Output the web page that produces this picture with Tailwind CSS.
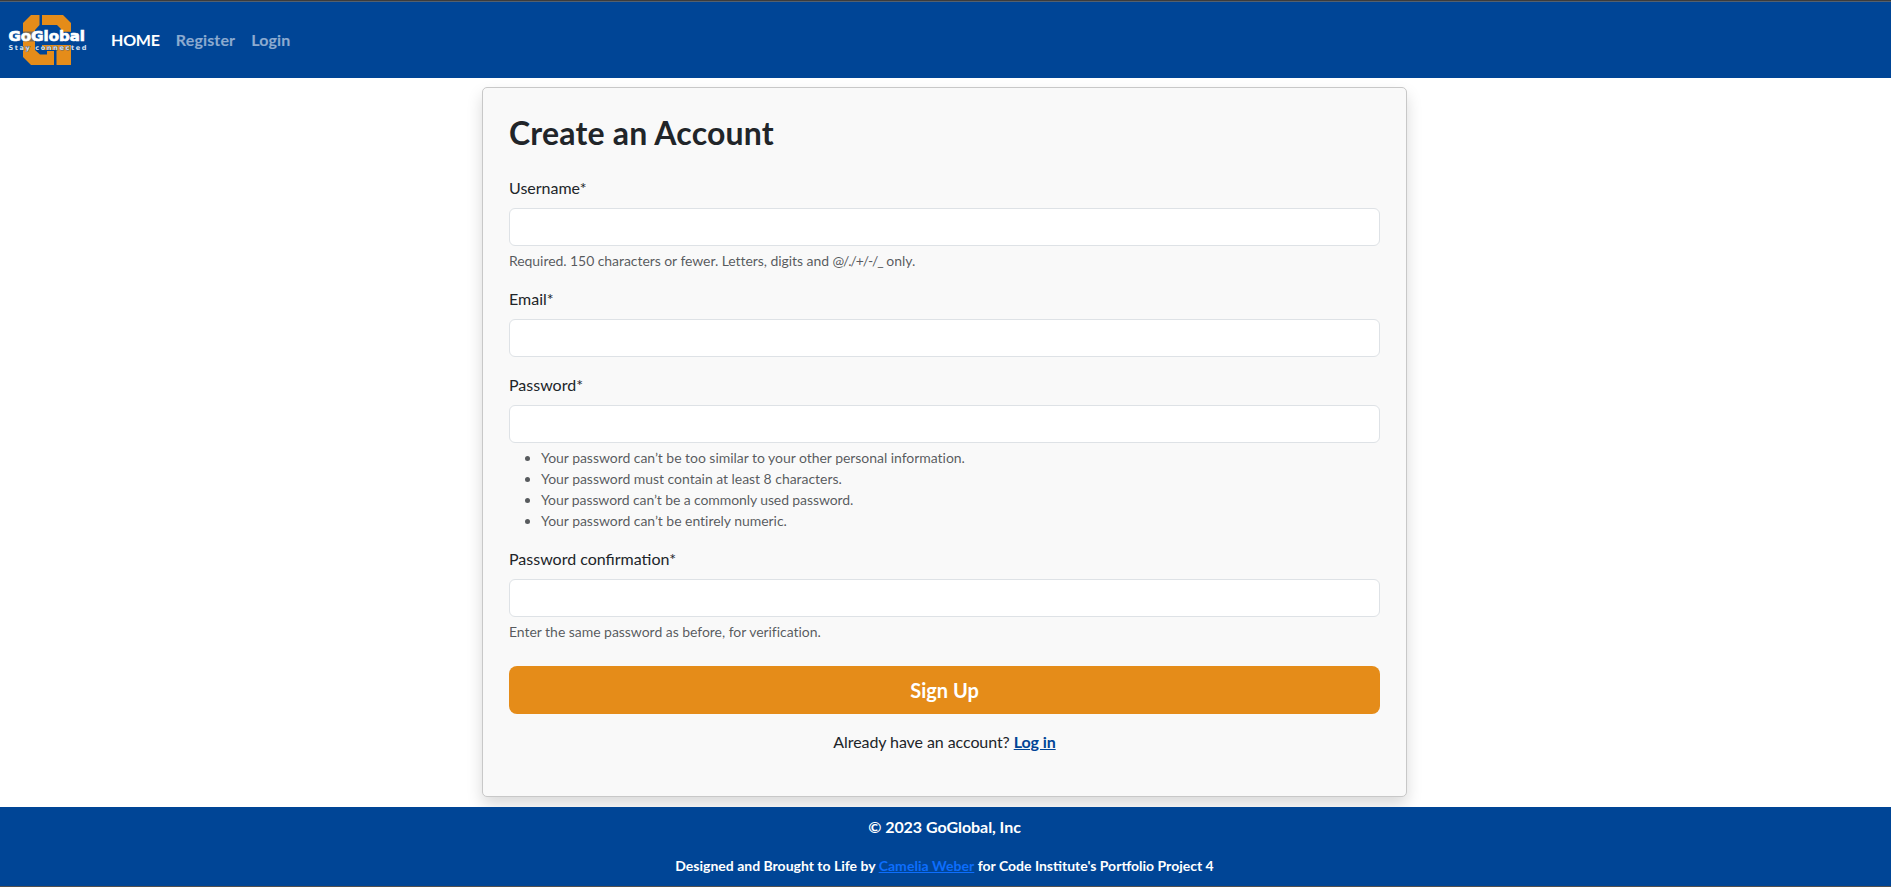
<!DOCTYPE html>
<html lang="en">
<head>
<meta charset="utf-8">
<title>GoGlobal - Sign Up</title>
<script src="https://cdn.jsdelivr.net/npm/@tailwindcss/browser@4"></script>
</head>
<body class="h-[887px] w-[1891px] overflow-hidden bg-white font-['Lato',sans-serif] text-base text-[#212529]">
<div class="flex h-full flex-col border-t border-b border-[#3c3c3c] border-b-[#505050]">
  <nav class="flex h-[77px] shrink-0 items-center border-t border-[#53606f] bg-[#004596] pl-2 font-bold">
    <svg class="h-[52px] w-[80px]" viewBox="8 14 80 52" role="img" aria-label="GoGlobal">
      <g fill="#e58c19">
        <path d="M31 15H39.5V25L35 30V50L40 54.5H47V51H54V65H31L23 57V23Z"/>
        <path d="M42 15H63L71 23V32H61V29L57 25H42Z"/>
        <path d="M42 45H71V65H56.5V50H42Z"/>
      </g>
      <path d="M22 31.5H72V41.5H22Z" fill="#004596" fill-opacity=".45"/>
      <text x="8.5" y="41" font-family="DejaVu Sans" font-weight="700" font-size="14.5" fill="#fff" stroke="#fff" stroke-width=".7" textLength="76.5" lengthAdjust="spacingAndGlyphs">GoGlobal</text>
      <text x="8.5" y="49.5" font-family="DejaVu Sans" font-size="6.6" fill="#d3e0f2" stroke="#004596" stroke-opacity=".6" stroke-width="1" paint-order="stroke" textLength="78">Stay connected</text>
    </svg>
    <div class="ml-[23px] flex gap-4 text-white/55">
      <a class="tracking-[-0.2px] text-white">HOME</a><a class="tracking-[0.15px]">Register</a><a class="tracking-[0.1px]">Login</a>
    </div>
  </nav>
  <main class="h-[729px] shrink-0 pt-[9px]">
    <section class="ml-[482px] h-[710px] w-[925px] rounded-[5px] border border-[#c8c8c8] bg-[#f9f9f9] px-[26px] pt-[25px] shadow-[0_8px_16px_rgba(0,0,0,0.15)]">
      <h1 class="mb-6 h-[39px] pt-px text-[32px] leading-[38px] font-bold tracking-[0.2px]">Create an Account</h1>
      <label class="mb-2 block">Username*</label>
      <input class="block h-[38px] w-full rounded-md border border-[#dee2e6] bg-white">
      <p class="mt-1 mb-4 text-sm leading-[21px] text-[#212529]/75"><span class="tracking-[-0.06px]">Required. 150 characters or fewer. Letters, digits and </span><span class="tracking-[-1.1px]">@/./+/-/_</span> only.</p>
      <label class="mb-2 block">Email*</label>
      <input class="mb-4 block h-[38px] w-full rounded-md border border-[#dee2e6] bg-white">
      <label class="mb-2 block">Password*</label>
      <input class="block h-[38px] w-full rounded-md border border-[#dee2e6] bg-white">
      <ul class="mt-1 mb-4 list-disc pl-8 text-sm leading-[21px] text-[#212529]/75">
        <li class="tracking-[-0.04px]">Your password can’t be too similar to your other personal information.</li>
        <li class="tracking-[-0.04px]">Your password must contain at least 8 characters.</li>
        <li class="tracking-[-0.1px]">Your password can’t be a commonly used password.</li>
        <li class="tracking-[-0.04px]">Your password can’t be entirely numeric.</li>
      </ul>
      <label class="mb-2 block">Password confirmation*</label>
      <input class="block h-[38px] w-full rounded-md border border-[#dee2e6] bg-white">
      <p class="mt-1 mb-6 text-sm leading-[21px] tracking-[-0.04px] text-[#212529]/75">Enter the same password as before, for verification.</p>
      <button class="block h-12 w-full rounded-lg bg-[#e58c19] text-xl font-bold text-white">Sign Up</button>
      <p class="mt-4 text-center tracking-[-0.08px]">Already have an account? <a class="font-bold text-[#004596] underline">Log in</a></p>
    </section>
  </main>
  <footer class="flex-1 bg-[#004596] pt-2 pr-[2px] text-center font-bold text-white">
    <p class="tracking-[-0.05px]">© 2023 GoGlobal, Inc</p>
    <p class="mt-4 text-sm leading-[21px]">Designed and Brought to Life by <a class="tracking-[0.05px] text-[#0d6efd] underline">Camelia Weber</a> for Code Institute's Portfolio Project 4</p>
  </footer>
</div>
</body>
</html>
